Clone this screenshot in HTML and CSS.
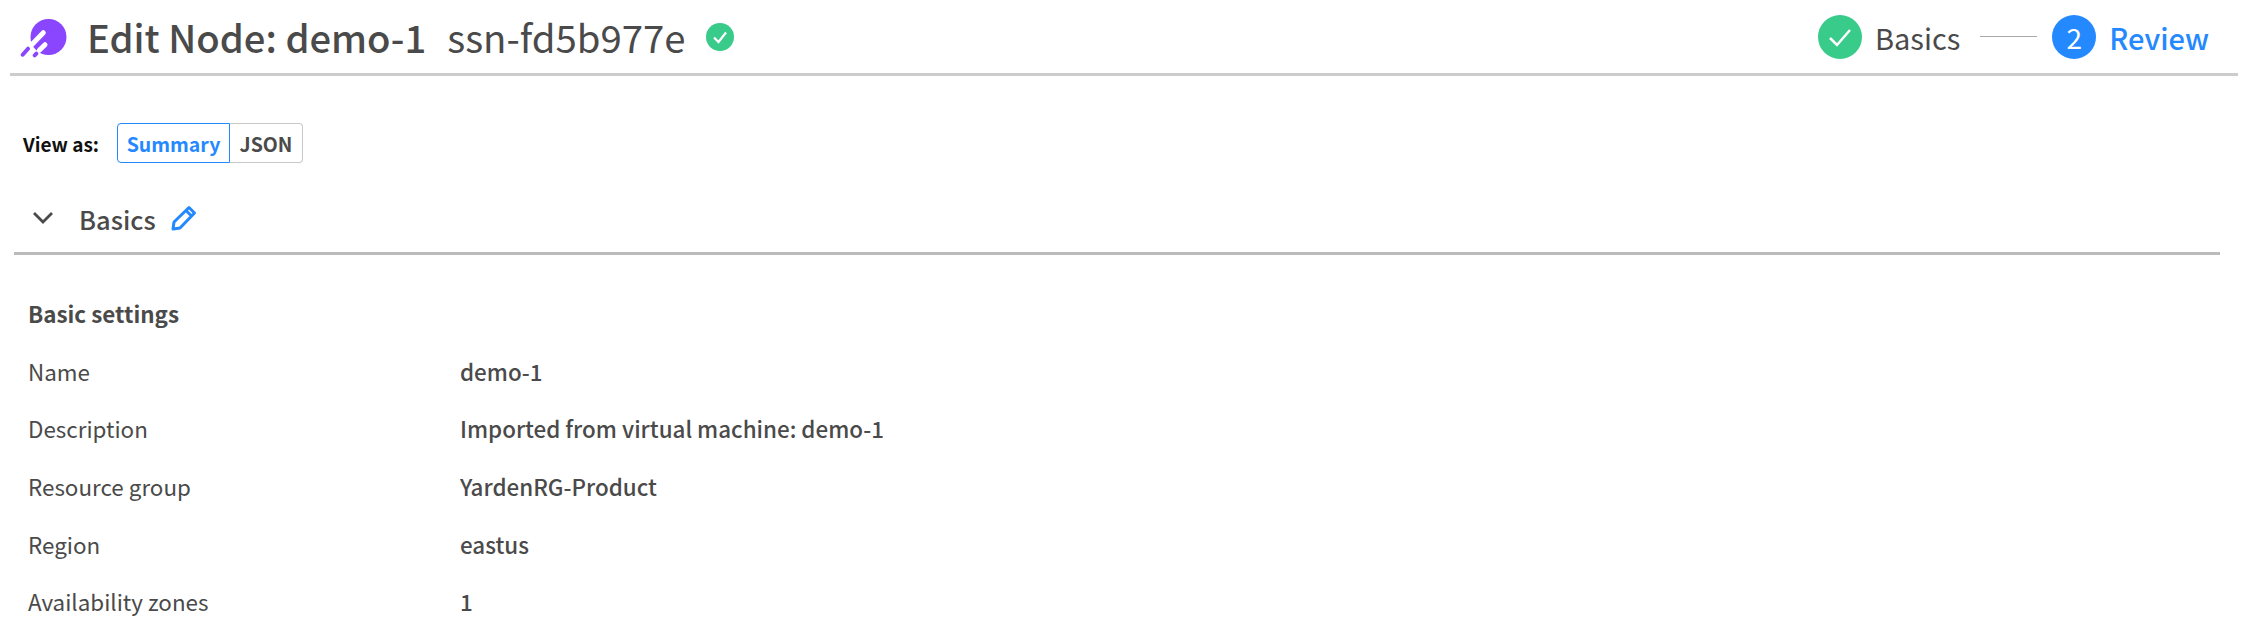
FILE: index.html
```html
<!DOCTYPE html>
<html lang="en">
<head>
    <meta charset="UTF-8">
    <meta name="viewport" content="width=device-width, initial-scale=1.0">
    <title>Edit Node: demo-1</title>
    <link rel="stylesheet" href="styles.css">
</head>
<body>
    <header class="topbar">
        <div class="title">
            <svg class="logo" viewBox="0 0 50 46" width="50" height="46">
                <circle cx="28.500" cy="23" r="18" fill="#8a46ff"/>
                <path d="M23.300 18.700 L11.700 30.700 M25 30.700 L19.300 36.300" stroke="#fff" stroke-width="5" stroke-linecap="round"/>
                <path d="M2.700 40.700 L8 34.700 M14.700 41.300 L16.300 39.700" stroke="#8a46ff" stroke-width="4" stroke-linecap="round"/>
            </svg>
            <h1>Edit Node: demo-1</h1>
            <span class="node-id">ssn-fd5b977e</span>
            <span class="status-dot">
                <svg viewBox="0 0 28 28" width="28" height="28">
                    <circle cx="14" cy="14" r="14" fill="#38cb89"/>
                    <path d="M8 14.500 L12.500 19 L20 9.500" stroke="#fff" stroke-width="2.200" fill="none"/>
                </svg>
            </span>
        </div>
        <ol class="steps">
            <li class="step done">
                <span class="step-mark">
                    <svg viewBox="0 0 44 44" width="44" height="44">
                        <path d="M12 23 L19 30 L32 15" stroke="#fff" stroke-width="2.500" fill="none"/>
                    </svg>
                </span>
                Basics
            </li>
            <li class="step-line"></li>
            <li class="step current">
                <span class="step-mark">2</span>
                Review
            </li>
        </ol>
    </header>

    <div class="view-as">
        <span class="view-label">View as:</span>
        <div class="switch">
            <button class="switch-btn active">Summary</button>
            <button class="switch-btn">JSON</button>
        </div>
    </div>

    <div class="section-head">
        <svg class="chevron" viewBox="0 0 22 14" width="22" height="14">
            <path d="M2 2 L11 11 L20 2" stroke="#4a4a4a" stroke-width="2.800" fill="none"/>
        </svg>
        <h2>Basics</h2>
        <svg class="pencil" viewBox="0 0 26 26" width="26" height="26">
            <path d="M2 24 L3 17 L18 2.500 L23.500 8 L9 23 Z M15 5.500 L20.500 11" stroke="#2488ff" stroke-width="3" fill="none" stroke-linejoin="round"/>
        </svg>
    </div>

    <section class="settings">
        <h3>Basic settings</h3>
        <dl class="fields">
            <dt>Name</dt>
            <dd>demo-1</dd>
            <dt>Description</dt>
            <dd>Imported from virtual machine: demo-1</dd>
            <dt>Resource group</dt>
            <dd>YardenRG-Product</dd>
            <dt>Region</dt>
            <dd>eastus</dd>
            <dt>Availability zones</dt>
            <dd>1</dd>
        </dl>
    </section>
</body>
</html>
```

FILE: styles.css
```css
html, body{
    height: 100%;
}
body{
    margin: 0;
    overflow: hidden;
    background: #fff;
    color: #4a4a4a;
    font-family: "Noto Sans CJK SC", "Noto Sans", sans-serif;
}
.topbar{
    display: flex;
    justify-content: space-between;
    align-items: center;
    box-sizing: border-box;
    height: 76px;
    margin: 0 14px 0 10px;
    padding: 0 29px 0 10px;
    border-bottom: 3px solid #ccc;
}
.title{
    display: flex;
    align-items: center;
}
.logo{
    margin-right: 17px;
}
h1{
    margin: 0;
    font-size: 38.200px;
    font-weight: 500;
}
.node-id{
    margin-left: 21px;
    font-size: 38.300px;
}
.status-dot{
    display: flex;
    margin-left: 21px;
}
.steps{
    display: flex;
    align-items: center;
    margin: 0;
    padding: 0;
    list-style: none;
}
.step{
    display: flex;
    align-items: center;
    gap: 13px;
    font-size: 29px;
}
.step-mark{
    display: flex;
    justify-content: center;
    align-items: center;
    width: 44px;
    height: 44px;
    border-radius: 50%;
    color: #fff;
    font-size: 28px;
}
.done .step-mark{
    background: #38cb89;
}
.current{
    color: #2488ff;
    font-weight: 500;
}
.current .step-mark{
    background: #2488ff;
    font-weight: 400;
}
.step-line{
    width: 57px;
    height: 1px;
    margin: 0 15px 0 20px;
    background: #aaa;
}
.view-as{
    display: flex;
    align-items: center;
    margin: 47px 0 0 23px;
}
.view-label{
    width: 94px;
    color: #111;
    font-size: 19px;
    font-weight: 700;
}
.switch{
    display: flex;
}
.switch-btn{
    box-sizing: border-box;
    width: 73px;
    height: 40px;
    padding: 0;
    border: 1px solid #c8c8c8;
    border-left: 0;
    border-radius: 0 4px 4px 0;
    background: #fff;
    color: #4a4a4a;
    font: 700 19.500px "Noto Sans CJK SC", sans-serif;
}
.switch-btn.active{
    width: 113px;
    border: 1px solid #2488ff;
    border-radius: 4px 0 0 4px;
    color: #2488ff;
}
.section-head{
    display: flex;
    align-items: center;
    box-sizing: border-box;
    height: 92px;
    margin: 0 32px 0 14px;
    padding: 21px 0 0 18px;
    border-bottom: 3px solid #bbb;
}
.chevron{
    margin-right: 25px;
}
h2{
    margin: 0 15px 0 0;
    font-size: 25.500px;
    font-weight: 500;
}
.settings{
    padding: 0 28px;
}
h3{
    margin: 42px 0 0;
    font-size: 22.400px;
    font-weight: 700;
    line-height: 32px;
}
.fields{
    display: grid;
    grid-template-columns: 432px 1fr;
    grid-auto-rows: 57.600px;
    align-items: center;
    margin: 13px 0 0;
    font-size: 22.400px;
}
dd{
    margin: 0;
    font-weight: 500;
}
```
